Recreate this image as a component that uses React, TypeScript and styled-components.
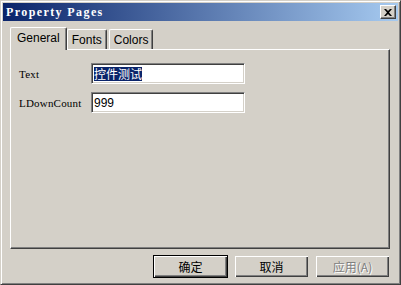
import React, { FC } from 'react';
import styled, { createGlobalStyle } from 'styled-components';

const GlobalStyle = createGlobalStyle`
    html, body {
        margin:0;
        padding:0;
        background:#d4d0c8;
    }
    * { box-sizing:border-box; }
`;

const Window = styled.div`
    width:401px;
    height:285px;
    background:#d4d0c8;
    border-top:1px solid #d4d0c8;
    border-left:1px solid #d4d0c8;
    border-right:1px solid #404040;
    border-bottom:1px solid #404040;
    box-shadow: inset 1px 1px 0 #ffffff, inset -1px -1px 0 #808080;
    padding:2px;
    display:flex;
    flex-direction:column;
`;

const TitleBar = styled.div`
    height:18px;
    background: linear-gradient(to right, #0a246a, #a6caf0);
    display:flex;
    align-items:center;
    justify-content:space-between;
    padding:0 2px 0 3px;
`;

const Title = styled.span`
    color:#ffffff;
    font-family:"Liberation Serif", serif;
    font-weight:bold;
    font-size:12px;
    letter-spacing:1.4px;
`;

const CloseButton = styled.div`
    width:16px;
    height:14px;
    background:#d4d0c8;
    border-top:1px solid #ffffff;
    border-left:1px solid #ffffff;
    border-right:1px solid #404040;
    border-bottom:1px solid #404040;
    box-shadow: inset -1px -1px 0 #808080;
    display:flex;
    align-items:center;
    justify-content:center;
`;

const Body = styled.div`
    flex:1;
    display:flex;
    flex-direction:column;
    padding:5px 8px 0 7px;
`;

const TabStrip = styled.div`
    display:flex;
    align-items:flex-end;
    height:23px;
`;

const Tab = styled.div<{ active?: boolean }>`
    position:relative;
    height:${p => p.active ? '23px' : '20px'};
    padding:${p => p.active ? '0 6px 2px 6px' : '0 4px'};
    margin:${p => p.active ? '0 -2px -1px 0' : '0 0 0 2px'};
    z-index:${p => p.active ? 2 : 1};
    background:#d4d0c8;
    border-top:1px solid #ffffff;
    border-left:1px solid #ffffff;
    border-right:1px solid #404040;
    border-top-left-radius:2px;
    border-top-right-radius:2px;
    box-shadow: inset -1px 0 0 #808080;
    display:flex;
    align-items:center;
    font-family:"Liberation Sans", Arial, sans-serif;
    font-size:12px;
    color:#000000;
`;

const Panel = styled.div`
    width:380px;
    height:200px;
    background:#d4d0c8;
    border-top:1px solid #ffffff;
    border-left:1px solid #ffffff;
    border-right:1px solid #404040;
    border-bottom:1px solid #404040;
    box-shadow: inset -1px -1px 0 #808080;
    padding:13px 0 0 8px;
    display:flex;
    flex-direction:column;
    gap:8px;
`;

const FieldRow = styled.div`
    display:flex;
    align-items:center;
`;

const Label = styled.span`
    width:72px;
    font-family:"Liberation Serif", serif;
    font-size:11px;
    letter-spacing:0.2px;
    color:#000000;
`;

const Input = styled.div`
    width:154px;
    height:21px;
    background:#ffffff;
    border-top:1px solid #808080;
    border-left:1px solid #808080;
    border-right:1px solid #ffffff;
    border-bottom:1px solid #ffffff;
    box-shadow: inset 1px 1px 0 #404040, inset -1px -1px 0 #d4d0c8;
    padding:0 2px;
    display:flex;
    align-items:center;
    font-family:"Liberation Sans", "Noto Sans CJK SC", sans-serif;
    font-size:12px;
    color:#000000;
`;

const Selected = styled.span`
    background:#0a246a;
    color:#ffffff;
    font-family:"Noto Sans CJK SC", sans-serif;
    font-size:12px;
    line-height:14px;
`;

const ButtonRow = styled.div`
    display:flex;
    justify-content:flex-end;
    gap:6px;
    margin-top:6px;
`;

const Button = styled.div<{ isDefault?: boolean; disabled?: boolean }>`
    width:75px;
    height:23px;
    background:#d4d0c8;
    border:1px solid ${p => p.isDefault ? '#000000' : 'transparent'};
    box-shadow: inset 1px 1px 0 #ffffff, inset -1px -1px 0 #404040, inset -2px -2px 0 #808080;
    display:flex;
    align-items:center;
    justify-content:center;
    font-family:"Noto Sans CJK SC", sans-serif;
    font-size:12px;
    color:${p => p.disabled ? '#808080' : '#000000'};
    text-shadow:${p => p.disabled ? '1px 1px 0 #ffffff' : 'none'};
`;

const App: FC = () => {
    return (
        <>
            <GlobalStyle />
            <Window>
                <TitleBar>
                    <Title>Property Pages</Title>
                    <CloseButton>
                        <svg width="8" height="7" viewBox="0 0 8 7">
                            <path d="M0 0 L2 0 L4 2 L6 0 L8 0 L5 3.5 L8 7 L6 7 L4 5 L2 7 L0 7 L3 3.5 Z" fill="#000" />
                        </svg>
                    </CloseButton>
                </TitleBar>
                <Body>
                    <TabStrip>
                        <Tab active>General</Tab>
                        <Tab>Fonts</Tab>
                        <Tab>Colors</Tab>
                    </TabStrip>
                    <Panel>
                        <FieldRow>
                            <Label>Text</Label>
                            <Input><Selected>控件测试</Selected></Input>
                        </FieldRow>
                        <FieldRow>
                            <Label>LDownCount</Label>
                            <Input>999</Input>
                        </FieldRow>
                    </Panel>
                    <ButtonRow>
                        <Button isDefault>确定</Button>
                        <Button>取消</Button>
                        <Button disabled>应用(A)</Button>
                    </ButtonRow>
                </Body>
            </Window>
        </>
    );
};

export default App;
